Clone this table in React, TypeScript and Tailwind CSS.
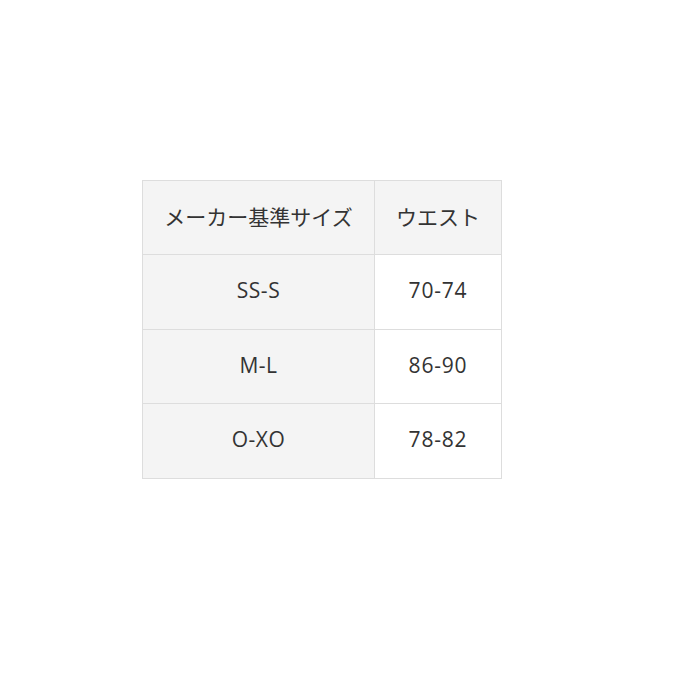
import React from 'react';

const rows = [
    { size: 'SS-S', waist: '70-74', h: 'h-[75px]' },
    { size: 'M-L', waist: '86-90', h: 'h-[74px]' },
    { size: 'O-XO', waist: '78-82', h: 'h-[75px]' },
];

export default function App() {
    return (
        <div
            className="w-[680px] h-[680px] bg-white pl-[142px] pt-[180px] text-[#333]"
            style={{ fontFamily: '"Open Sans", "Noto Sans CJK JP", sans-serif' }}
        >
            <table className="border-collapse border border-[#ddd] text-[21px]">
                <tbody>
                    <tr className="h-[74px]">
                        <th className="w-[232px] border border-[#ddd] bg-[#f4f4f4] font-normal text-center">
                            メーカー基準サイズ
                        </th>
                        <th className="w-[127px] border border-[#ddd] bg-[#f4f4f4] font-normal text-center">
                            ウエスト
                        </th>
                    </tr>
                    {rows.map((r) => (
                        <tr key={r.size} className={r.h}>
                            <td className="border border-[#ddd] bg-[#f4f4f4] text-center tracking-[0.5px] pb-[2px]">
                                {r.size}
                            </td>
                            <td className="border border-[#ddd] bg-white text-center tracking-[0.8px] pb-[2px]">
                                {r.waist}
                            </td>
                        </tr>
                    ))}
                </tbody>
            </table>
        </div>
    );
}
